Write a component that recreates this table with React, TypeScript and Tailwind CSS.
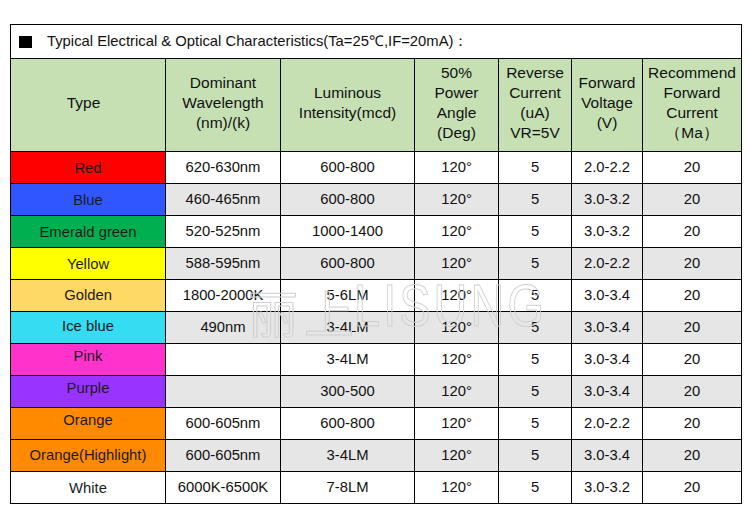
const columns = [
  { key: "type", width: "w-[155px]", label: ["Type"] },
  { key: "wave", width: "w-[115px]", label: ["Dominant", "Wavelength", "(nm)/(k)"] },
  { key: "lum", width: "w-[134px]", label: ["Luminous", "Intensity(mcd)"] },
  { key: "angle", width: "w-[84px]", label: ["50%", "Power", "Angle", "(Deg)"] },
  { key: "rev", width: "w-[73px]", label: ["Reverse", "Current", "(uA)", "VR=5V"] },
  { key: "volt", width: "w-[71px]", label: ["Forward", "Voltage", "(V)"] },
  { key: "cur", width: "w-[99px]", label: ["Recommend", "Forward", "Current", "（Ma）"] },
]

// pad: nudges the colour label inside its cell, as in the source sheet
const rows = [
  { name: "Red", bg: "bg-[#ff0000]", wave: "620-630nm", lum: "600-800", volt: "2.0-2.2", gray: false, pad: "pt-[2px]" },
  { name: "Blue", bg: "bg-[#3056ff]", wave: "460-465nm", lum: "600-800", volt: "3.0-3.2", gray: true, pad: "pt-[2px]" },
  { name: "Emerald green", bg: "bg-[#00b050]", wave: "520-525nm", lum: "1000-1400", volt: "3.0-3.2", gray: false, pad: "pt-[2px]" },
  { name: "Yellow", bg: "bg-[#ffff00]", wave: "588-595nm", lum: "600-800", volt: "2.0-2.2", gray: true, pad: "pt-[2px]" },
  { name: "Golden", bg: "bg-[#ffd966]", wave: "1800-2000K", lum: "5-6LM", volt: "3.0-3.4", gray: false, pad: "pb-[1px]" },
  { name: "Ice blue", bg: "bg-[#35ddf3]", wave: "490nm", lum: "3-4LM", volt: "3.0-3.4", gray: true, pad: "pb-[2px]" },
  { name: "Pink", bg: "bg-[#ff33cc]", wave: "", lum: "3-4LM", volt: "3.0-3.4", gray: false, pad: "pb-[7px]" },
  { name: "Purple", bg: "bg-[#9933ff]", wave: "", lum: "300-500", volt: "3.0-3.4", gray: true, pad: "pb-[7px]" },
  { name: "Orange", bg: "bg-[#ff8a00]", wave: "600-605nm", lum: "600-800", volt: "2.0-2.2", gray: false, pad: "pb-[6px]" },
  { name: "Orange(Highlight)", bg: "bg-[#ff8a00]", wave: "600-605nm", lum: "3-4LM", volt: "3.0-3.4", gray: true, pad: "pb-[1px]" },
  { name: "White", bg: "bg-white", wave: "6000K-6500K", lum: "7-8LM", volt: "3.0-3.2", gray: false, pad: "pt-[1px]" },
]

export default function App() {
  return (
    <div className="w-[750px] h-[520px] bg-white pt-6 pl-[10px] font-['Liberation_Sans',Arial,sans-serif] text-[#111]">
      <div className="relative w-[731px]">
        <table className="border-collapse table-fixed w-[731px]">
          <colgroup>
            {columns.map((c) => (
              <col key={c.key} className={c.width} />
            ))}
          </colgroup>
          <thead>
            <tr>
              <td colSpan={7} className="h-[34px] border border-black px-2 text-[14.8px]">
                <div className="flex items-center gap-[15px]">
                  <span className="inline-block w-[13px] h-[12px] bg-black" />
                  <span>Typical Electrical &amp; Optical Characteristics(Ta=25℃,IF=20mA)：</span>
                </div>
              </td>
            </tr>
            <tr className="bg-[#c6e0b4]">
              {columns.map((c) => (
                <th
                  key={c.key}
                  className={`h-[93px] border border-black pb-[5px] font-normal text-[15.5px] leading-[20px] text-center ${c.key === "type" ? "pr-[9px]" : ""}`}
                >
                  {c.label.map((l) => (
                    <div key={l}>{l}</div>
                  ))}
                </th>
              ))}
            </tr>
          </thead>
          <tbody className="text-[14.8px] text-center">
            {rows.map((r) => {
              const cell = `h-[32px] border border-black ${r.gray ? "bg-[#e7e6e6]" : "bg-white"}`
              return (
                <tr key={r.name}>
                  <td className={`h-[32px] border border-black ${r.bg} ${r.pad} text-[#1c1c1c]`}>{r.name}</td>
                  <td className={cell}>{r.wave}</td>
                  <td className={cell}>{r.lum}</td>
                  <td className={cell}>120°</td>
                  <td className={cell}>5</td>
                  <td className={cell}>{r.volt}</td>
                  <td className={cell}>20</td>
                </tr>
              )
            })}
          </tbody>
        </table>
        {/* faint outlined watermark */}
        <div className="pointer-events-none absolute left-[238px] top-[252px] flex items-end leading-none text-transparent [-webkit-text-stroke:1px_#cfcfcf]">
          <span className="text-[50px] w-[56px] font-['Noto_Sans_CJK_SC',sans-serif]">丽</span>
          <span className="text-[50px] w-[50px] font-['Noto_Sans_CJK_SC',sans-serif]">上</span>
          <span className="text-[60px] scale-x-[0.78] origin-left tracking-[4px] font-['Liberation_Sans',sans-serif]">LISUNG</span>
        </div>
      </div>
    </div>
  )
}
